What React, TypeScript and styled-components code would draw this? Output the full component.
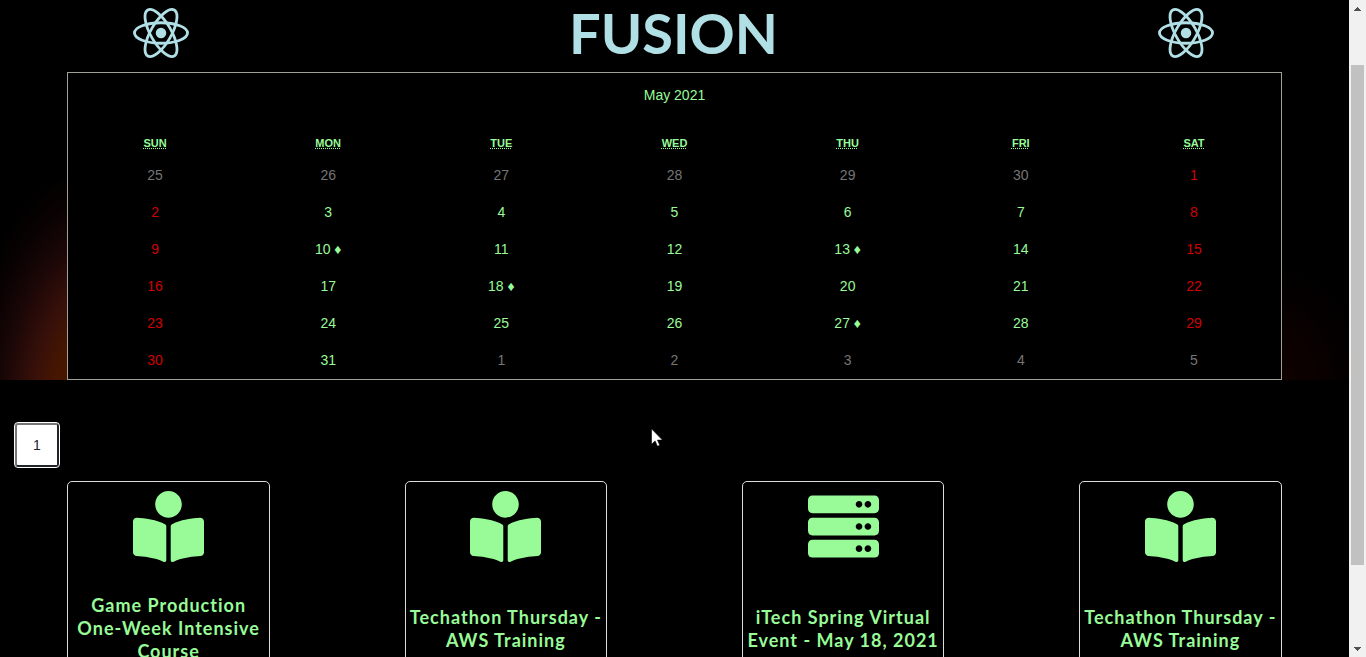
import React from "react";
import styled, { createGlobalStyle } from "styled-components";
import { FaBookReader, FaServer } from "react-icons/fa";

const GlobalStyle = createGlobalStyle`
  *, *::before, *::after { box-sizing: border-box; }
  body {
    margin: 0;
    background: #000;
    overflow: hidden;
    font-family: Lato, "Liberation Sans", sans-serif;
  }
`;

const Screen = styled.div`
  position: relative;
  display: flex;
  height: 100vh;
  overflow: hidden;
  background: #000;
`;

const Page = styled.main`
  flex: 1;
  min-width: 0;
  overflow: hidden;
`;

const Header = styled.header`
  display: flex;
  align-items: center;
  justify-content: space-between;
  height: 72px;
  padding: 0 135px 6px 133px;
  color: #b0e0e6;
`;

const Title = styled.h1`
  margin: 0;
  font-size: 56px;
  line-height: 68px;
  font-weight: 700;
`;

const Atom = styled.svg`
  display: block;
  width: 56px;
  height: 50px;
`;

const CalendarBand = styled.section`
  display: flex;
  justify-content: center;
  background:
    radial-gradient(
      ellipse 150px 250px at 110px 338px,
      #501a00 0%,
      #461600 38%,
      #38100a 52%,
      #1c0707 70%,
      #0a0202 86%,
      transparent 100%
    ) no-repeat,
    radial-gradient(ellipse 100px 120px at calc(100% - 80px) 100%, #120200, transparent 100%) no-repeat,
    #000;
`;

const Calendar = styled.div`
  width: 90%;
  border: 1px solid #a0a096;
  background: #000;
  font-family: Arial, "Liberation Sans", sans-serif;
  font-size: 14px;
  line-height: 16px;
`;

const MonthButton = styled.button`
  display: block;
  width: 100%;
  height: 44px;
  margin-bottom: 14px;
  padding: 0;
  border: 0;
  background: none;
  color: #98fb98;
  font: inherit;
`;

const MonthTable = styled.table`
  width: 100%;
  table-layout: fixed;
  border-collapse: collapse;
`;

const WeekdayCell = styled.th`
  height: 26px;
  padding: 0 0 2px;
  color: #98fb98;
  font-size: 11px;
  line-height: 12px;
  text-transform: uppercase;

  abbr {
    text-decoration: underline dotted;
  }
`;

const DateCell = styled.td`
  padding: 0;
`;

type Tone = "day" | "weekend" | "outside";
const tones: Record<Tone, string> = {
  day: "#98fb98",
  weekend: "#d10000",
  outside: "#757575",
};

const DateButton = styled.button<{ $tone: Tone }>`
  display: block;
  width: 100%;
  height: 37px;
  padding: 0 0 2px;
  border: 0;
  background: none;
  color: ${({ $tone }) => tones[$tone]};
  font: inherit;
  text-align: center;
`;

const Pager = styled.nav`
  padding: 43px 15px 14px;
`;

const PageButton = styled.button`
  display: block;
  width: 44px;
  height: 44px;
  padding: 0;
  border: 2px solid;
  border-color: #767676 #212529 #212529 #767676;
  border-radius: 3px;
  outline: 1px solid #fff;
  background: #fff;
  color: #212529;
  font: 14px/20px Arial, "Liberation Sans", sans-serif;
`;

const CardRow = styled.section`
  display: grid;
  grid-template-columns: repeat(4, 1fr);
  justify-items: center;
`;

const Card = styled.article`
  display: flex;
  flex-direction: column;
  align-items: center;
  width: 60%;
  height: 300px;
  padding-top: 9px;
  border: 1px solid #dcdcdc;
  border-radius: 5px;
  color: #98fb98;

  svg {
    display: block;
    width: 71px;
    height: 71px;
  }
`;

const CardTitle = styled.h2`
  display: flex;
  align-items: center;
  justify-content: center;
  width: 100%;
  height: 133px;
  margin: 0;
  font-size: 18px;
  line-height: 23px;
  font-weight: 700;
  letter-spacing: 1px;
  text-align: center;
`;

const Scrollbar = styled.aside`
  display: flex;
  flex-direction: column;
  width: 17px;
  padding: 0 2px;
  background: #f1f1f1;
`;

const ScrollArrow = styled.button`
  display: flex;
  align-items: center;
  justify-content: center;
  height: 17px;
  padding: 0;
  border: 0;
  background: none;
`;

const ScrollTrack = styled.div`
  flex: 1;
  padding-top: 48px;
`;

const ScrollThumb = styled.div`
  height: 87%;
  background: #c1c1c1;
`;

const Pointer = styled.svg`
  position: absolute;
  top: 428px;
  left: 651px;
  width: 12px;
  height: 19px;
  pointer-events: none;
`;

const AtomLogo = () => (
  <Atom viewBox="-11.5 -10.23174 23 20.46348" aria-hidden="true">
    <circle r="2.15" fill="currentColor" />
    <g fill="none" stroke="currentColor" strokeWidth="1.15">
      <ellipse rx="10.9" ry="4.2" />
      <ellipse rx="10.9" ry="4.2" transform="rotate(60)" />
      <ellipse rx="10.9" ry="4.2" transform="rotate(120)" />
    </g>
  </Atom>
);

const weekdays = [
  ["Sun", "Sunday"],
  ["Mon", "Monday"],
  ["Tue", "Tuesday"],
  ["Wed", "Wednesday"],
  ["Thu", "Thursday"],
  ["Fri", "Friday"],
  ["Sat", "Saturday"],
];

const eventDays = [10, 13, 18, 27];

const weeks = Array.from({ length: 6 }, (_, week) =>
  Array.from({ length: 7 }, (_, weekday) => {
    const offset = week * 7 + weekday - 5;
    const inMonth = offset >= 1 && offset <= 31;
    const date = offset < 1 ? offset + 30 : offset > 31 ? offset - 31 : offset;
    const tone: Tone = !inMonth ? "outside" : weekday % 6 === 0 ? "weekend" : "day";
    return { date, tone, event: inMonth && eventDays.includes(date) };
  })
);

const events = [
  { icon: FaBookReader, title: "Game Production One-Week Intensive Course" },
  { icon: FaBookReader, title: "Techathon Thursday - AWS Training" },
  { icon: FaServer, title: "iTech Spring Virtual Event - May 18, 2021" },
  { icon: FaBookReader, title: "Techathon Thursday - AWS Training" },
];

export default function App() {
  return (
    <Screen>
      <GlobalStyle />
      <Page>
        <Header>
          <AtomLogo />
          <Title>FUSION</Title>
          <AtomLogo />
        </Header>
        <CalendarBand>
          <Calendar>
            <MonthButton type="button">May 2021</MonthButton>
            <MonthTable>
              <thead>
                <tr>
                  {weekdays.map(([short, full]) => (
                    <WeekdayCell key={short} scope="col">
                      <abbr title={full}>{short}</abbr>
                    </WeekdayCell>
                  ))}
                </tr>
              </thead>
              <tbody>
                {weeks.map((week, i) => (
                  <tr key={i}>
                    {week.map(({ date, tone, event }) => (
                      <DateCell key={date}>
                        <DateButton type="button" $tone={tone}>
                          {event ? `${date} ♦` : date}
                        </DateButton>
                      </DateCell>
                    ))}
                  </tr>
                ))}
              </tbody>
            </MonthTable>
          </Calendar>
        </CalendarBand>
        <Pager aria-label="Pages">
          <PageButton type="button">1</PageButton>
        </Pager>
        <CardRow>
          {events.map(({ icon: Icon, title }, i) => (
            <Card key={i}>
              <Icon aria-hidden="true" />
              <CardTitle>{title}</CardTitle>
            </Card>
          ))}
        </CardRow>
      </Page>
      <Scrollbar>
        <ScrollArrow type="button" aria-label="Scroll up">
          <svg width="7" height="4" viewBox="0 0 7 4">
            <path d="M3 0h1v1h1v1h1v1h1v1H0V3h1V2h1V1h1z" fill="#505050" />
          </svg>
        </ScrollArrow>
        <ScrollTrack>
          <ScrollThumb />
        </ScrollTrack>
        <ScrollArrow type="button" aria-label="Scroll down">
          <svg width="7" height="4" viewBox="0 0 7 4">
            <path d="M0 0h7v1H6v1H5v1H4v1H3V3H2V2H1V1H0z" fill="#505050" />
          </svg>
        </ScrollArrow>
      </Scrollbar>
      <Pointer viewBox="0 0 12 19" aria-hidden="true">
        <path
          d="M.5.8v15.5l3.6-3.4 2.3 5.4 2.4-1-2.3-5.2h5z"
          fill="#fff"
          stroke="#000"
          strokeWidth="0.6"
        />
      </Pointer>
    </Screen>
  );
}
